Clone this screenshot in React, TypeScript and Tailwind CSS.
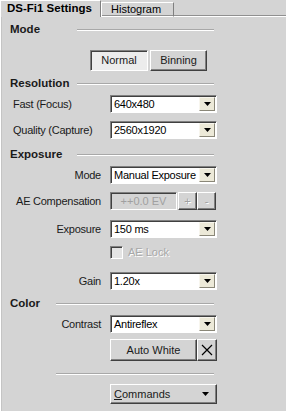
import type { ReactNode } from 'react'

const raised =
    'border border-t-white border-l-white border-r-[#404040] border-b-[#404040] shadow-[inset_-1px_-1px_#808080]'
const sunken =
    'border border-t-[#808080] border-l-[#808080] border-r-white border-b-white shadow-[inset_1px_1px_#404040]'

function Arrow() {
    return (
        <svg width="7" height="4" viewBox="0 0 7 4">
            <polygon points="0,0 7,0 3.5,4" fill="#000" />
        </svg>
    )
}

function Select({ value }: { value: string }) {
    return (
        <div className={`flex h-[18px] w-[107px] items-center bg-white ${sunken}`}>
            <span className="flex-1 overflow-hidden whitespace-nowrap pl-[3px] text-[11px] leading-none tracking-[-0.25px] text-black">
                {value}
            </span>
            <span className="mr-[1px] flex h-[14px] w-[16px] shrink-0 items-center justify-center border border-t-[#f8f6ee] border-l-[#f8f6ee] border-r-[#8a8778] border-b-[#8a8778] bg-[#ece9d8]">
                <Arrow />
            </span>
        </div>
    )
}

function Header({ title, labelWidth }: { title: string; labelWidth: string }) {
    return (
        <div className="flex h-[14px] items-center pl-[9px] pr-[72px]">
            <span className={`${labelWidth} text-[11.5px] font-bold leading-none text-[#1a1a1a]`}>
                {title}
            </span>
            <span className="h-[2px] flex-1 border-t border-b border-t-[#a8a8a8] border-b-white" />
        </div>
    )
}

function Row({
    label,
    align,
    children,
    className = '',
}: {
    label?: string
    align: 'left' | 'right'
    children: ReactNode
    className?: string
}) {
    return (
        <div className={`flex items-center ${className}`}>
            <span
                className={`w-[109px] whitespace-nowrap text-[11px] leading-none tracking-[-0.25px] text-[#1a1a1a] ${
                    align === 'left' ? 'pl-[12px] text-left' : 'pr-[9px] text-right'
                }`}
            >
                {label}
            </span>
            {children}
        </div>
    )
}

export default function App() {
    return (
        <div
            className="h-[411px] w-[286px] overflow-hidden bg-[#d4d4d4] text-black"
            style={{ fontFamily: 'Tahoma, "Liberation Sans", Arial, sans-serif' }}
        >
            {/* tabs */}
            <div className="flex h-[17px] items-end">
                <div className="flex h-[17px] w-[101px] items-center whitespace-nowrap border-t border-l border-r border-t-white border-l-white border-r-[#808080] bg-[#d4d4d4] pl-[6px] text-[11.5px] font-bold leading-none">
                    DS-Fi1 Settings
                </div>
                <div className="flex h-[15px] w-[73px] items-center border-t border-l border-r border-b border-t-white border-l-white border-r-[#808080] border-b-white pl-[9px] text-[11px] leading-none shadow-[inset_0_-1px_#909090]">
                    Histogram
                </div>
                <div className="h-[2px] flex-1 border-t border-b border-t-[#909090] border-b-white" />
            </div>

            <div className="flex h-[394px] flex-col border-l border-l-white shadow-[inset_1px_0_#c4c4c4]">
                <div className="mt-[6px]">
                    <Header title="Mode" labelWidth="w-[67px]" />
                </div>
                <div className="mt-[13px] flex h-[21px] gap-[2px] pl-[89px]">
                    <div
                        className={`flex w-[58px] items-center justify-center bg-[#ececec] text-[11px] leading-none text-[#1a1a1a] ${sunken}`}
                    >
                        Normal
                    </div>
                    <div
                        className={`flex w-[57px] items-center justify-center bg-[#d4d4d4] text-[11px] leading-none text-[#1a1a1a] ${raised}`}
                    >
                        Binning
                    </div>
                </div>

                <div className="mt-[6px]">
                    <Header title="Resolution" labelWidth="w-[67px]" />
                </div>
                <Row label="Fast (Focus)" align="left" className="mt-[4px]">
                    <Select value="640x480" />
                </Row>
                <Row label="Quality (Capture)" align="left" className="mt-[8px]">
                    <Select value="2560x1920" />
                </Row>

                <div className="mt-[9px]">
                    <Header title="Exposure" labelWidth="w-[67px]" />
                </div>
                <Row label="Mode" align="right" className="mt-[4px]">
                    <Select value="Manual Exposure" />
                </Row>
                <Row label="AE Compensation" align="right" className="mt-[8px]">
                    <div
                        className={`flex h-[18px] w-[67px] items-center justify-center bg-[#d4d4d4] text-[11px] leading-none text-[#a0a0a0] ${sunken}`}
                    >
                        ++0.0 EV
                    </div>
                    <div
                        className={`ml-[1px] flex h-[18px] w-[19px] items-center justify-center text-[11px] leading-none text-[#a0a0a0] [text-shadow:1px_1px_#fff] ${raised}`}
                    >
                        +
                    </div>
                    <div
                        className={`flex h-[18px] w-[19px] items-center justify-center text-[11px] leading-none text-[#a0a0a0] [text-shadow:1px_1px_#fff] ${raised}`}
                    >
                        -
                    </div>
                </Row>
                <Row label="Exposure" align="right" className="mt-[10px]">
                    <Select value="150 ms" />
                </Row>
                <Row align="right" className="mt-[8px] h-[13px]">
                    <span className={`h-[13px] w-[13px] bg-[#e4e4e4] ${sunken}`} />
                    <span className="ml-[5px] text-[11px] leading-none text-[#a8a8a8] [text-shadow:1px_1px_#fff]">
                        AE Lock
                    </span>
                </Row>
                <Row label="Gain" align="right" className="mt-[13px]">
                    <Select value="1.20x" />
                </Row>

                <div className="mt-[7px]">
                    <Header title="Color" labelWidth="w-[46px]" />
                </div>
                <Row label="Contrast" align="right" className="mt-[4px]">
                    <Select value="Antireflex" />
                </Row>
                <Row align="right" className="mt-[6px]">
                    <div
                        className={`flex h-[22px] w-[87px] items-center justify-center text-[11px] leading-none text-[#1a1a1a] ${raised}`}
                    >
                        Auto White
                    </div>
                    <div className={`flex h-[22px] w-[20px] items-center justify-center ${raised}`}>
                        <svg width="12" height="12" viewBox="0 0 12 12">
                            <path d="M1 1 L11 11 M11 1 L1 11" stroke="#000" strokeWidth="1.2" />
                        </svg>
                    </div>
                </Row>

                <div className="mt-[12px] flex h-[2px] pl-[55px] pr-[72px]">
                    <span className="h-[2px] flex-1 border-t border-b border-t-[#a8a8a8] border-b-white" />
                </div>
                <Row align="right" className="mt-[9px]">
                    <div
                        className={`flex h-[20px] w-[107px] items-center justify-between pl-[3px] pr-[7px] text-[11px] leading-none text-[#1a1a1a] ${raised}`}
                    >
                        <span>
                            <span className="underline">C</span>ommands
                        </span>
                        <Arrow />
                    </div>
                </Row>
            </div>
        </div>
    )
}
